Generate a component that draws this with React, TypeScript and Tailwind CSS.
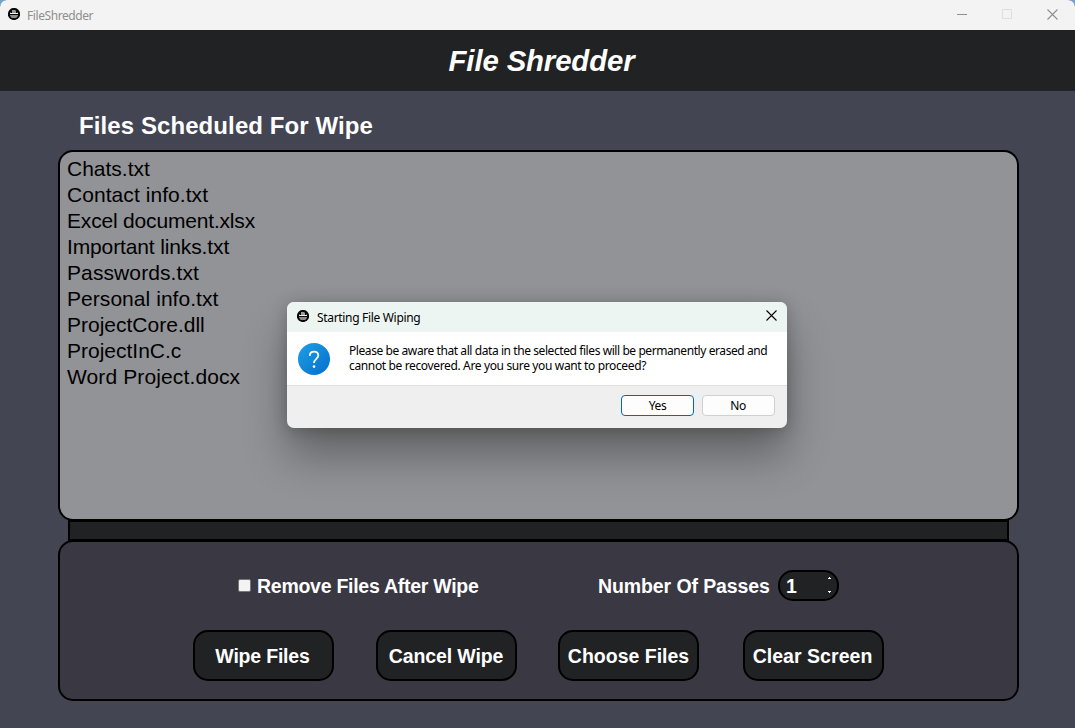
import React from "react";

const files = [
  { name: "Chats.txt", tracking: "" },
  { name: "Contact info.txt", tracking: "tracking-[0.06px]" },
  { name: "Excel document.xlsx", tracking: "tracking-[-0.18px]" },
  { name: "Important links.txt", tracking: "tracking-[-0.13px]" },
  { name: "Passwords.txt", tracking: "tracking-[0.1px]" },
  { name: "Personal info.txt", tracking: "tracking-[0.05px]" },
  { name: "ProjectCore.dll", tracking: "" },
  { name: "ProjectInC.c", tracking: "" },
  { name: "Word Project.docx", tracking: "tracking-[0.12px]" },
];

function AppIcon() {
  return (
    <svg width="12" height="12" viewBox="0 0 12 12" className="block shrink-0">
      <circle cx="6" cy="6" r="6.1" fill="#080808" />
      <path d="M4 2h3l1 1v2H4z" fill="#9a9a9a" />
      <path d="M2 4h1v1H2zM9 4h1v1H9z" fill="#4a4a4a" />
      <rect x="2" y="5" width="8" height="1" fill="#f2f2f2" />
      <path d="M2 7h8c-.2 1.300-1 2.500-2 3H4c-1-.5-1.800-1.700-2-3z" fill="#8d8d8d" />
    </svg>
  );
}

function CloseIcon() {
  return (
    <svg width="11" height="11" viewBox="0 0 11 11" className="block" fill="none" stroke="currentColor">
      <path d="M.5.5l10 10M10.5.5l-10 10" strokeWidth="1.1" />
    </svg>
  );
}

function ActionButton({ label, tracking = "" }: { label: string; tracking?: string }) {
  return (
    <button
      className={`flex h-[51px] w-[141px] items-center justify-center whitespace-nowrap rounded-[15px] border-2 border-black bg-[#212223] pt-[3px] text-[19.5px] font-bold leading-none text-white ${tracking}`}
    >
      {label}
    </button>
  );
}

function Dialog() {
  return (
    <div className="absolute left-[287px] top-[302px] flex h-[126px] w-[500px] flex-col overflow-hidden rounded-[7px] bg-[#efefef] font-['Noto_Sans',sans-serif] text-black shadow-[0_28px_44px_rgba(0,0,0,0.32),0_2px_16px_rgba(0,0,0,0.22)]">
      <div className="flex h-[30px] shrink-0 items-center bg-[#edf5f2] pl-[10px] pr-[10px]">
        <div className="-mt-[2px]"><AppIcon /></div>
        <span className="ml-2 grow whitespace-nowrap pt-px text-[12px] leading-none tracking-[-0.32px]">Starting File Wiping</span>
        <div className="-mt-[3px]"><CloseIcon /></div>
      </div>
      <div className="flex h-[53px] shrink-0 bg-white pl-[11px] pt-[11px]">
        <svg width="32" height="32" viewBox="0 0 32 32" className="block shrink-0">
          <defs>
            <linearGradient id="q" x1="0" y1="0" x2="1" y2="1">
              <stop offset="0.1" stopColor="#1c9be2" />
              <stop offset="0.9" stopColor="#0673d0" />
            </linearGradient>
          </defs>
          <circle cx="16" cy="16" r="16" fill="url(#q)" />
          <path d="M11.8 12.9c0-2.5 1.800-4.200 4.300-4.200s4.200 1.500 4.200 3.800c0 3.300-4.300 3.600-4.300 7.600" fill="none" stroke="#fff" strokeWidth="1.8" />
          <circle cx="16" cy="23.6" r="1.3" fill="#fff" />
        </svg>
        <p className="ml-[19px] whitespace-nowrap text-[12px] leading-[15px] tracking-[-0.42px]">
          Please be aware that all data in the selected files will be permanently erased and
          <br />
          <span className="tracking-[-0.36px]">cannot be recovered. Are you sure you want to proceed?</span>
        </p>
      </div>
      <div className="flex grow justify-end gap-2 border-t border-[#dfdfdf] pr-3 pt-[9px] text-[12px] leading-none tracking-[-0.4px]">
        <button className="h-[21px] w-[73px] rounded-[4px] border border-[#0067c0] bg-[#fdfdfd] leading-none">Yes</button>
        <button className="h-[21px] w-[73px] rounded-[4px] border border-[#d0d0d0] bg-[#fdfdfd] pr-px leading-none">No</button>
      </div>
    </div>
  );
}

export default function App() {
  return (
    <div className="h-[728px] w-[1075px] overflow-hidden bg-[#6fa5cc] font-['Liberation_Sans',Arial,sans-serif]">
      <div className="relative flex h-[728px] flex-col overflow-hidden rounded-t-[7px] bg-[#444552]">
        <div className="flex h-[30px] shrink-0 items-center bg-[#f3f3f3] pl-2 pr-[17px] text-[#8f8f8f]">
          <div className="-mt-[2px]"><AppIcon /></div>
          <span className="ml-[7px] grow pt-px font-['Noto_Sans',sans-serif] text-[12px] leading-none tracking-[-0.42px]">FileShredder</span>
          <div className="-mt-[2px] flex items-center">
            <div className="h-px w-[10px] bg-[#8f8f8f]" />
            <div className="ml-[35px] size-[10px] rounded-[1px] border border-[#dedede]" />
            <div className="ml-[35px]"><CloseIcon /></div>
          </div>
        </div>
        <header className="flex h-[61px] shrink-0 items-center justify-center bg-[#212223] pl-[8px]">
          <h1 className="text-[29.33px] font-bold italic leading-none tracking-[-0.12px] text-white">File Shredder</h1>
        </header>
        <main className="flex flex-col pl-[58px] pr-[56px]">
          <h2 className="flex h-[59px] items-center pl-[21px] pt-[11px] text-[24px] font-bold leading-none tracking-[0.09px] text-white">
            Files Scheduled For Wipe
          </h2>
          <ul className="h-[371px] rounded-[15px] border-2 border-black bg-[#929397] pl-[7px] pt-[4px] text-[21px] leading-[26px] text-black">
            {files.map((f) => (
              <li key={f.name} className={f.tracking}>{f.name}</li>
            ))}
          </ul>
          <div className="-mt-px ml-[10px] mr-[10px] h-[21px] border-2 border-black bg-[#212223]" />
          <section className="-mt-px flex h-[161px] flex-col rounded-[15px] border-2 border-black bg-[#393843] text-[19.5px] font-bold text-white">
            <div className="mt-7 flex h-[31px] items-center pl-[178px]">
              <div className="size-[13px] rounded-[2px] border border-[#777] bg-[#f3f3f3]" />
              <span className="ml-[6px] w-[341px] pt-[2px] leading-none tracking-[-0.27px]">Remove Files After Wipe</span>
              <span className="w-[180px] pt-[2px] leading-none tracking-[-0.1px]">Number Of Passes</span>
              <div className="flex h-[31px] w-[61px] items-center justify-between rounded-[15px] border-2 border-black bg-[#212223] pl-1.5 pr-[5px]">
                <span className="pt-[2px] leading-none">1</span>
                <svg width="5" height="17" viewBox="0 0 5 17" className="block" fill="#fff">
                  <path d="M1 1h3v1H1zM2 0h1v1H2zM1 14h3v1H1zM2 15h1v1H2z" />
                </svg>
              </div>
            </div>
            <div className="mt-[29px] flex pl-[133px]">
              <ActionButton label="Wipe Files" tracking="tracking-[-0.2px] pr-[2px]" />
              <div className="ml-[42px]"><ActionButton label="Cancel Wipe" tracking="tracking-[-0.12px] pr-px" /></div>
              <div className="ml-[41px]"><ActionButton label="Choose Files" /></div>
              <div className="ml-[44px]"><ActionButton label="Clear Screen" tracking="tracking-[0.04px] pr-[2px]" /></div>
            </div>
          </section>
        </main>
        <Dialog />
      </div>
    </div>
  );
}
